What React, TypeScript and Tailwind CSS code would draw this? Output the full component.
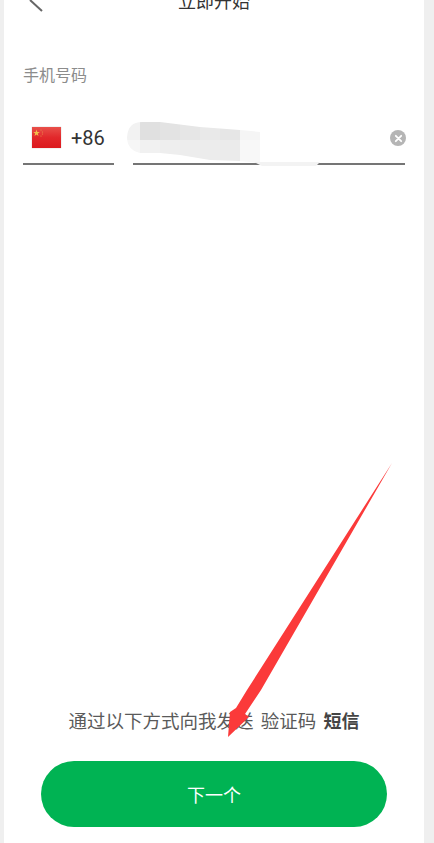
import React from 'react';

const cjk = '"Noto Sans CJK SC", "Noto Sans", sans-serif';

function Flag() {
  return (
    <svg viewBox="0 0 29 21" className="h-[21px] w-[29px] shadow-[0_0_1px_rgba(0,0,0,0.3)]">
      <defs>
        <linearGradient id="flagRed" x1="0" y1="0" x2="0" y2="1">
          <stop offset="0" stopColor="#e8504a" />
          <stop offset="0.5" stopColor="#e2282b" />
          <stop offset="1" stopColor="#dc1a1e" />
        </linearGradient>
      </defs>
      <rect width="29" height="21" fill="url(#flagRed)" />
      <polygon points="4.5,2.5 5.3,5 7.8,5 5.8,6.5 6.5,9 4.5,7.4 2.5,9 3.2,6.5 1.2,5 3.7,5" fill="#f2c04a" />
      <circle cx="9" cy="3" r="0.6" fill="#ea8a4a" />
      <circle cx="10.5" cy="5" r="0.6" fill="#ea8a4a" />
      <circle cx="10.5" cy="7" r="0.6" fill="#ea8a4a" />
      <circle cx="9" cy="9" r="0.6" fill="#ea8a4a" />
    </svg>
  );
}

// mosaic blocks of the smudge over the phone number
const smudge = [
  { x: 120, w: 20, top: '#f2f2f2', bottom: '#f6f6f6' },
  { x: 140, w: 20, top: '#e0e0e0', bottom: '#f1f1f1' },
  { x: 160, w: 20, top: '#e3e3e3', bottom: '#eeeeee' },
  { x: 180, w: 20, top: '#e6e6e6', bottom: '#ededed' },
  { x: 200, w: 20, top: '#e9e9e9', bottom: '#ececec' },
  { x: 220, w: 20, top: '#e6e6e6', bottom: '#ebebeb' },
  { x: 240, w: 20, top: '#f5f5f5', bottom: '#f8f8f8' },
];

export default function App() {
  return (
    <div className="relative h-[843px] w-[434px] overflow-hidden bg-[#efefef]" style={{ fontFamily: cjk }}>
      <div className="ml-1 flex h-full w-[420px] flex-col bg-white">
        {/* Header, scrolled partly off the top */}
        <header className="relative -mt-[13px] flex h-[26px] shrink-0 items-center justify-center">
          <svg viewBox="0 0 20 28" className="absolute left-[22px] top-0 h-[28px] w-[20px]">
            <path d="M4 13 L16 24" stroke="#666666" strokeWidth="2" fill="none" />
          </svg>
          <span className="text-[18px] leading-[26px] text-[#333333]">立即开始</span>
        </header>

        <div className="mt-[50px] px-[19px] text-[16px] leading-[22px] text-[#8c8c8c]">手机号码</div>

        <div className="mt-[31px] flex gap-[19px] px-[19px]">
          <div className="flex h-[49px] w-[91px] items-center gap-[10px] border-b-2 border-[#757575] pb-[4px] pl-[9px]">
            <Flag />
            <span className="text-[20px] text-[#333333]" style={{ fontFamily: 'Roboto, sans-serif' }}>+86</span>
          </div>
          <div className="relative h-[49px] flex-1 border-b-2 border-[#757575]">
            <span className="absolute right-[-1px] top-[14px] flex h-4 w-4 items-center justify-center rounded-full bg-[#b5b5b5]">
              <svg viewBox="0 0 10 10" className="h-[9px] w-[9px]">
                <path d="M2 2 L8 8 M8 2 L2 8" stroke="#fff" strokeWidth="2" strokeLinecap="round" />
              </svg>
            </span>
          </div>
        </div>

        <div className="flex-1" />

        <p className="text-center text-[18.5px] leading-[24px] text-[#5a5a5a] [word-spacing:3px]">
          通过以下方式向我发送 验证码 <b className="text-[18px] font-bold text-[#444444]">短信</b>
        </p>

        <div className="mb-[16px] mt-[29px] flex justify-center">
          <button className="h-[66px] w-[346px] rounded-full bg-[#00b353] text-[18px] text-white">下一个</button>
        </div>
      </div>

      {/* Smudge hiding the number */}
      <svg viewBox="0 0 434 843" className="pointer-events-none absolute inset-0 h-full w-full">
        <defs>
          <clipPath id="smudgeClip">
            <path d="M127 137 Q128 122 142 122 L160 122 L200 127 L240 130 L260 132 L260 163 L240 161 L210 160 L180 155 L160 153 L140 153 Q127 150 127 137 Z" />
          </clipPath>
        </defs>
        <g clipPath="url(#smudgeClip)">
          {smudge.map((b) => (
            <g key={b.x}>
              <rect x={b.x} y="120" width={b.w} height="20" fill={b.top} />
              <rect x={b.x} y="140" width={b.w} height="25" fill={b.bottom} />
            </g>
          ))}
        </g>
        <path d="M254 162 L320 162 L316 166 L262 166 Z" fill="#f3f3f3" />
        {/* Red annotation arrow */}
        <polygon points="392,463 261,690 245,714 249,717 228,737 230,712 236,708 247,690" fill="#fb3a3a" />
      </svg>
    </div>
  );
}
